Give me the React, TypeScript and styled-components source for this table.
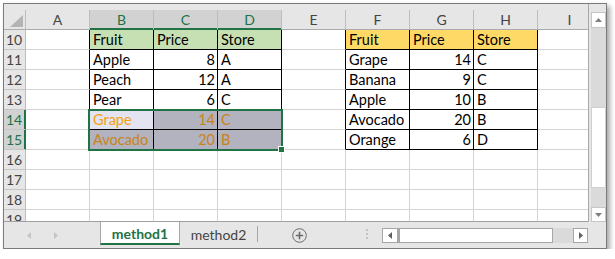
import { Fragment } from "react";
import styled, { createGlobalStyle } from "styled-components";

const GlobalStyle = createGlobalStyle`
  body {
    margin: 0;
    background: #ffffff;
    font-family: Lato, "Liberation Sans", sans-serif;
  }
`;

type CellData = { text?: string; num?: boolean; fill?: string; color?: string };

const COLUMNS = ["A", "B", "C", "D", "E", "F", "G", "H", "I"];
const ROW_NUMBERS = [10, 11, 12, 13, 14, 15, 16, 17, 18, 19];
const SELECTED_COLS = [1, 2, 3];
const SELECTED_ROWS = [14, 15];

const GREEN = "#c6e0b4";
const YELLOW = "#ffd966";
const ACTIVE = "#e3e3f2";
const SELECTED = "#b3b2bf";
const ORANGE = "#f2a20c";
const ORANGE_DIM = "#c7841a";

const sheetData: Record<number, Record<number, CellData>> = {
  10: {
    1: { text: "Fruit", fill: GREEN }, 2: { text: "Price", fill: GREEN }, 3: { text: "Store", fill: GREEN },
    5: { text: "Fruit", fill: YELLOW }, 6: { text: "Price", fill: YELLOW }, 7: { text: "Store", fill: YELLOW },
  },
  11: {
    1: { text: "Apple" }, 2: { text: "8", num: true }, 3: { text: "A" },
    5: { text: "Grape" }, 6: { text: "14", num: true }, 7: { text: "C" },
  },
  12: {
    1: { text: "Peach" }, 2: { text: "12", num: true }, 3: { text: "A" },
    5: { text: "Banana" }, 6: { text: "9", num: true }, 7: { text: "C" },
  },
  13: {
    1: { text: "Pear" }, 2: { text: "6", num: true }, 3: { text: "C" },
    5: { text: "Apple" }, 6: { text: "10", num: true }, 7: { text: "B" },
  },
  14: {
    1: { text: "Grape", fill: ACTIVE, color: ORANGE },
    2: { text: "14", num: true, fill: SELECTED, color: ORANGE_DIM },
    3: { text: "C", fill: SELECTED, color: ORANGE_DIM },
    5: { text: "Avocado" }, 6: { text: "20", num: true }, 7: { text: "B" },
  },
  15: {
    1: { text: "Avocado", fill: SELECTED, color: ORANGE_DIM },
    2: { text: "20", num: true, fill: SELECTED, color: ORANGE_DIM },
    3: { text: "B", fill: SELECTED, color: ORANGE_DIM },
    5: { text: "Orange" }, 6: { text: "6", num: true }, 7: { text: "D" },
  },
};

// both tables sit in rows 10-15, columns B-D and F-H
const inTable = (row: number, col: number) =>
  row >= 10 && row <= 15 && ((col >= 1 && col <= 3) || (col >= 5 && col <= 7));

const Window = styled.div`
  margin: 3px 0 0 3px;
  width: 604px;
  height: 246px;
  box-sizing: border-box;
  border: 1px solid #7b7b7b;
  background: #e6e6e6;
  box-shadow: 3px 3px 5px rgba(0, 0, 0, 0.35);
  display: flex;
  flex-direction: column;
`;

const Main = styled.div`
  display: flex;
  height: 218px;
`;

const Sheet = styled.div`
  position: relative;
  width: 585px;
  height: 218px;
  box-sizing: border-box;
  padding-top: 6px;
  border-right: 1px solid #a8a8a8;
  border-bottom: 1px solid #a0a0a0;
  overflow: hidden;
`;

const Grid = styled.div`
  display: grid;
  grid-template-columns: 22px repeat(9, 64px);
  grid-auto-rows: 20px;
  background: #ffffff;
`;

const Corner = styled.div`
  box-sizing: border-box;
  background: #e6e6e6;
  border-right: 1px solid #bdbdbd;
  border-bottom: 1px solid #ababab;
  display: flex;
  align-items: flex-end;
  justify-content: flex-end;
  padding: 0 2px 2px 0;
`;

const ColHeader = styled.div<{ $selected: boolean }>`
  box-sizing: border-box;
  background: ${(p) => (p.$selected ? "#d2d2d2" : "#e6e6e6")};
  border-right: 1px solid #bdbdbd;
  border-bottom: 1px solid ${(p) => (p.$selected ? "#217346" : "#ababab")};
  box-shadow: ${(p) => (p.$selected ? "inset 0 -1px 0 #217346" : "none")};
  color: ${(p) => (p.$selected ? "#217346" : "#444444")};
  font-size: 14px;
  line-height: 19px;
  text-align: center;
`;

const RowHeader = styled.div<{ $selected: boolean }>`
  box-sizing: border-box;
  background: ${(p) => (p.$selected ? "#d2d2d2" : "#e6e6e6")};
  border-right: 1px solid ${(p) => (p.$selected ? "#217346" : "#bdbdbd")};
  border-bottom: 1px solid #c6c6c6;
  box-shadow: ${(p) => (p.$selected ? "inset -1px 0 0 #217346" : "none")};
  color: ${(p) => (p.$selected ? "#217346" : "#444444")};
  font-size: 14px;
  line-height: 20px;
  padding-left: 2px;
`;

const Cell = styled.div<{ $num: boolean; $fill: string; $color: string; $right: boolean; $bottom: boolean }>`
  box-sizing: border-box;
  background: ${(p) => p.$fill};
  color: ${(p) => p.$color};
  border-right: 1px solid ${(p) => (p.$right ? "#000000" : "#d4d4d4")};
  border-bottom: 1px solid ${(p) => (p.$bottom ? "#000000" : "#d4d4d4")};
  font-size: 14.5px;
  line-height: 20px;
  text-align: ${(p) => (p.$num ? "right" : "left")};
  padding: 0 2px 0 3px;
  white-space: nowrap;
  overflow: hidden;
`;

const Selection = styled.div`
  position: absolute;
  left: 84px;
  top: 105px;
  width: 195px;
  height: 42px;
  box-sizing: border-box;
  border: 2px solid #217346;
  pointer-events: none;
`;

const FillHandle = styled.div`
  position: absolute;
  left: 274px;
  top: 142px;
  width: 7px;
  height: 7px;
  box-sizing: border-box;
  background: #217346;
  border: 1px solid #ffffff;
`;

const VScroll = styled.div`
  width: 17px;
  box-sizing: border-box;
  padding: 8px 0 0 2px;
  display: flex;
  flex-direction: column;
`;

const ScrollButton = styled.div<{ $w: number; $h: number; $dark?: boolean }>`
  width: ${(p) => p.$w}px;
  height: ${(p) => p.$h}px;
  flex-shrink: 0;
  box-sizing: border-box;
  background: #ffffff;
  border: 1px solid ${(p) => (p.$dark ? "#a6a6a6" : "#c6c6c6")};
  display: flex;
  align-items: center;
  justify-content: center;
`;

const VTrack = styled.div`
  flex: 1;
  background: #dadada;
  display: flex;
  flex-direction: column;
`;

const VThumb = styled.div`
  margin-top: 79px;
  height: 81px;
  box-sizing: border-box;
  background: #ffffff;
  border: 1px solid #d0d0d0;
`;

const TabBar = styled.div`
  display: flex;
  align-items: flex-start;
  height: 26px;
`;

const NavArea = styled.div`
  width: 96px;
  height: 26px;
  display: flex;
  align-items: center;
  gap: 23px;
  padding-left: 23px;
  box-sizing: border-box;
`;

const Tab = styled.div<{ $active?: boolean }>`
  width: ${(p) => (p.$active ? 80 : 77)}px;
  height: 23px;
  box-sizing: border-box;
  background: ${(p) => (p.$active ? "#ffffff" : "transparent")};
  border-left: ${(p) => (p.$active ? "1px solid #a6a6a6" : "none")};
  border-right: ${(p) => (p.$active ? "1px solid #a6a6a6" : "none")};
  border-bottom: ${(p) => (p.$active ? "2px solid #217346" : "none")};
  color: ${(p) => (p.$active ? "#217346" : "#444444")};
  font-weight: ${(p) => (p.$active ? 700 : 400)};
  font-size: 14px;
  line-height: 23px;
  text-align: center;
  padding-top: ${(p) => (p.$active ? 0 : 1)}px;
`;

const TabDivider = styled.div`
  width: 1px;
  height: 16px;
  margin-top: 4px;
  background: #a6a6a6;
`;

const AddButton = styled.div`
  margin: 6px 0 0 34px;
  width: 15px;
  height: 15px;
  display: flex;
`;

const Dots = styled.div`
  margin: 7px 0 0 59px;
  width: 2px;
  display: flex;
  flex-direction: column;
  gap: 2px;
  span {
    width: 2px;
    height: 2px;
    background: #c2c2c2;
  }
`;

const HScroll = styled.div`
  margin: 6px 0 0 14px;
  width: 206px;
  height: 15px;
  display: flex;
  background: #dadada;
`;

const HThumb = styled.div`
  width: 155px;
  box-sizing: border-box;
  background: #ffffff;
  border: 1px solid #a6a6a6;
  border-left-width: 2px;
`;

const Spacer = styled.div`
  flex: 1;
`;

const Arrow = ({ dir, color }: { dir: "up" | "down" | "left" | "right"; color: string }) => {
  const points = {
    up: "0,4 7,4 3.5,0",
    down: "0,0 7,0 3.5,4",
    left: "4,0 4,7 0,3.5",
    right: "0,0 0,7 4,3.5",
  }[dir];
  const vertical = dir === "up" || dir === "down";
  return (
    <svg width={vertical ? 7 : 4} height={vertical ? 4 : 7} viewBox={vertical ? "0 0 7 4" : "0 0 4 7"}>
      <polygon points={points} fill={color} />
    </svg>
  );
};

const App = () => {
  return (
    <>
      <GlobalStyle />
      <Window>
        <Main>
          <Sheet>
            <Grid>
              <Corner>
                <svg width="13" height="12" viewBox="0 0 13 12">
                  <polygon points="13,0 13,12 0,12" fill="#b4b4b4" />
                </svg>
              </Corner>
              {COLUMNS.map((c, i) => (
                <ColHeader key={c} $selected={SELECTED_COLS.includes(i)}>{c}</ColHeader>
              ))}
              {ROW_NUMBERS.map((r) => (
                <Fragment key={r}>
                  <RowHeader $selected={SELECTED_ROWS.includes(r)}>{r}</RowHeader>
                  {COLUMNS.map((_, ci) => {
                    const d = sheetData[r]?.[ci] ?? {};
                    return (
                      <Cell
                        key={ci}
                        $num={!!d.num}
                        $fill={d.fill ?? "#ffffff"}
                        $color={d.color ?? "#000000"}
                        $right={inTable(r, ci) || inTable(r, ci + 1)}
                        $bottom={inTable(r, ci)}
                      >
                        {d.text}
                      </Cell>
                    );
                  })}
                </Fragment>
              ))}
            </Grid>
            <Selection />
            <FillHandle />
          </Sheet>
          <VScroll>
            <ScrollButton $w={15} $h={16}>
              <Arrow dir="up" color="#7f7f7f" />
            </ScrollButton>
            <VTrack>
              <VThumb />
            </VTrack>
            <ScrollButton $w={15} $h={15}>
              <Arrow dir="down" color="#7f7f7f" />
            </ScrollButton>
          </VScroll>
        </Main>
        <TabBar>
          <NavArea>
            <Arrow dir="left" color="#c4c4c4" />
            <Arrow dir="right" color="#c4c4c4" />
          </NavArea>
          <Tab $active>method1</Tab>
          <Tab>method2</Tab>
          <TabDivider />
          <AddButton>
            <svg width="15" height="15" viewBox="0 0 15 15">
              <circle cx="7.5" cy="7.5" r="6.8" fill="none" stroke="#6b6b6b" strokeWidth="1" />
              <path d="M7.5 3.8v7.4M3.8 7.5h7.4" stroke="#6b6b6b" strokeWidth="1.6" />
            </svg>
          </AddButton>
          <Dots>
            <span />
            <span />
            <span />
          </Dots>
          <HScroll>
            <ScrollButton $w={16} $h={15} $dark>
              <Arrow dir="left" color="#5f5f5f" />
            </ScrollButton>
            <HThumb />
            <Spacer />
            <ScrollButton $w={15} $h={15} $dark>
              <Arrow dir="right" color="#5f5f5f" />
            </ScrollButton>
          </HScroll>
        </TabBar>
      </Window>
    </>
  );
};

export default App;
